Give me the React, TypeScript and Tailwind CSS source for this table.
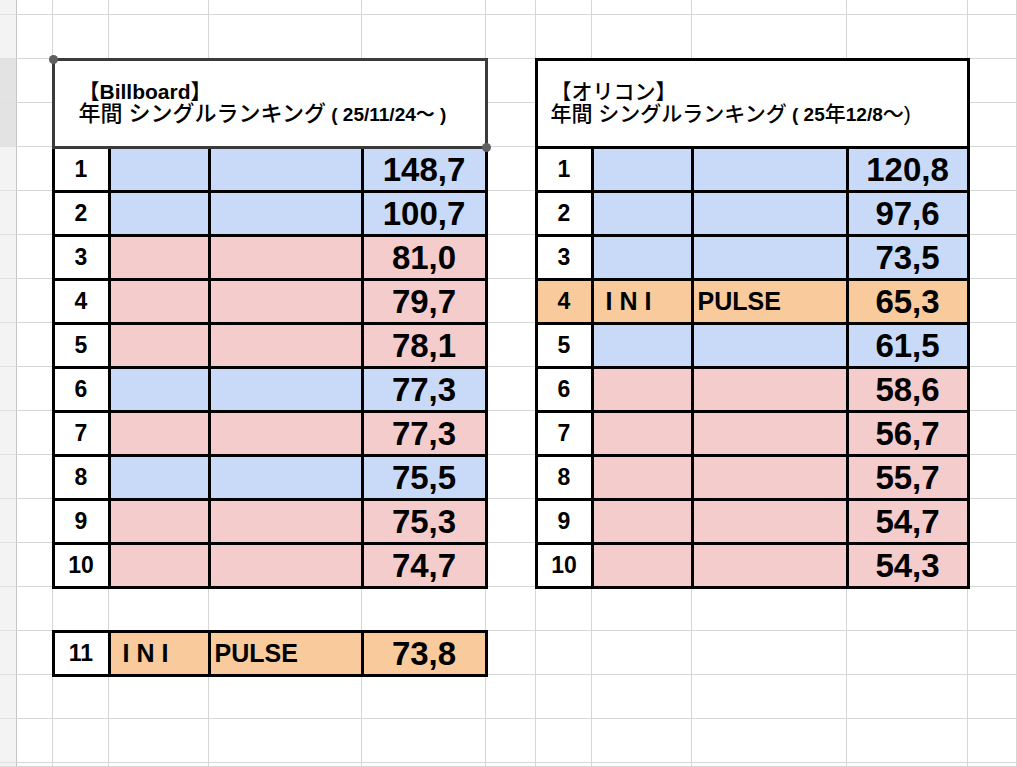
import React from 'react';

type Row = {
  rank: number;
  color: 'blue' | 'pink' | 'orange';
  value: string;
  artist?: string;
  song?: string;
  rankOrange?: boolean;
};

const fills = {
  blue: 'bg-[#c9daf8]',
  pink: 'bg-[#f4cccc]',
  orange: 'bg-[#f9cb9c]',
};

const billboard: Row[] = [
  { rank: 1, color: 'blue', value: '148,7' },
  { rank: 2, color: 'blue', value: '100,7' },
  { rank: 3, color: 'pink', value: '81,0' },
  { rank: 4, color: 'pink', value: '79,7' },
  { rank: 5, color: 'pink', value: '78,1' },
  { rank: 6, color: 'blue', value: '77,3' },
  { rank: 7, color: 'pink', value: '77,3' },
  { rank: 8, color: 'blue', value: '75,5' },
  { rank: 9, color: 'pink', value: '75,3' },
  { rank: 10, color: 'pink', value: '74,7' },
];

const billboardExtra: Row[] = [{ rank: 11, color: 'orange', value: '73,8', artist: 'I N I', song: 'PULSE' }];

const oricon: Row[] = [
  { rank: 1, color: 'blue', value: '120,8' },
  { rank: 2, color: 'blue', value: '97,6' },
  { rank: 3, color: 'blue', value: '73,5' },
  { rank: 4, color: 'orange', value: '65,3', artist: 'I N I', song: 'PULSE', rankOrange: true },
  { rank: 5, color: 'blue', value: '61,5' },
  { rank: 6, color: 'pink', value: '58,6' },
  { rank: 7, color: 'pink', value: '56,7' },
  { rank: 8, color: 'pink', value: '55,7' },
  { rank: 9, color: 'pink', value: '54,7' },
  { rank: 10, color: 'pink', value: '54,3' },
];

// sheet columns / rows
const COLS = 12;
const ROWS = 19;

function Cells({ rows }: { rows: Row[] }) {
  return (
    <>
      {rows.map((r) => (
        <React.Fragment key={r.rank}>
          <div className={`flex min-h-0 items-center justify-center pt-[1px] text-[23px] font-bold leading-none ${r.rankOrange ? fills.orange : 'bg-white'}`}>
            {r.rank}
          </div>
          <div className={`flex min-h-0 items-center pl-[12px] text-[25px] font-bold leading-none ${fills[r.color]}`}>{r.artist}</div>
          <div className={`flex min-h-0 items-center pl-[4px] text-[25px] font-bold leading-none ${fills[r.color]}`}>{r.song}</div>
          <div className={`flex min-h-0 items-center justify-center text-[33px] font-bold leading-none ${fills[r.color]}`}>{r.value}</div>
        </React.Fragment>
      ))}
    </>
  );
}

export default function App() {
  return (
    <div className="grid h-[767px] w-[1017px] overflow-hidden bg-white font-['Liberation_Sans','Noto_Sans_CJK_JP',sans-serif] text-black">
      {/* sheet gridlines */}
      <div className="col-start-1 row-start-1 grid grid-cols-[17px_36px_56px_100px_153px_124px_50px_56px_100px_155px_121px_1fr] grid-rows-[15px_repeat(17,44px)_1fr]">
        {Array.from({ length: ROWS }).map((_, r) =>
          Array.from({ length: COLS }).map((_, c) =>
            c === 0 ? (
              <div
                key={`${r}-${c}`}
                className={`border-r border-b border-r-[#c4c4c4] border-b-[#e0e0e0] ${r === 2 || r === 3 ? 'bg-[#e3e3e3]' : 'bg-[#f3f3f3]'}`}
              />
            ) : (
              <div key={`${r}-${c}`} className="border-r border-b border-[#d6d6d6]" />
            )
          )
        )}
      </div>

      {/* sheet content */}
      <div className="col-start-1 row-start-1 grid grid-cols-[17px_36px_56px_100px_153px_124px_50px_56px_100px_155px_121px_1fr] grid-rows-[15px_repeat(17,44px)_1fr]">
        {/* Billboard */}
        <div className="col-start-3 col-end-7 row-start-5 row-end-15 -m-[1.5px] grid grid-cols-[53fr_97fr_150fr_121fr] grid-rows-[repeat(10,minmax(0,1fr))] gap-[3px] bg-black p-[3px]">
          <Cells rows={billboard} />
        </div>
        <div className="col-start-3 col-end-7 row-start-16 row-end-17 -m-[1.5px] grid grid-cols-[53fr_97fr_150fr_121fr] grid-rows-[minmax(0,1fr)] gap-[3px] bg-black p-[3px]">
          <Cells rows={billboardExtra} />
        </div>
        <div className="relative z-10 col-start-3 col-end-7 row-start-3 row-end-5 -m-[1.5px] flex flex-col justify-center border-[3px] border-[#3b3b3b] bg-white pl-[24px] text-[21px] leading-[22px]">
          <div className="font-bold">【Billboard】</div>
          <div>
            <span className="text-[22px] font-medium">年間 シングルランキング</span>
            <span className="text-[19px] font-bold"> ( 25/11/24～ )</span>
          </div>
          <span className="absolute -left-[6px] -top-[6px] h-[9px] w-[9px] rounded-full bg-[#5f5f5f]" />
          <span className="absolute -right-[6px] -bottom-[6px] h-[9px] w-[9px] rounded-full bg-[#5f5f5f]" />
        </div>

        {/* Oricon */}
        <div className="col-start-8 col-end-12 row-start-5 row-end-15 -m-[1.5px] grid grid-cols-[53fr_97fr_152fr_118fr] grid-rows-[repeat(10,minmax(0,1fr))] gap-[3px] bg-black p-[3px]">
          <Cells rows={oricon} />
        </div>
        <div className="col-start-8 col-end-12 row-start-3 row-end-5 -m-[1.5px] flex flex-col justify-center border-[3px] border-black bg-white pl-[13px] text-[21px] leading-[22px]">
          <div className="font-medium">【オリコン】</div>
          <div>
            <span className="font-medium">年間 シングルランキング</span>
            <span className="text-[19px] font-bold"> ( 25</span>
            <span className="font-medium">年</span>
            <span className="text-[19px] font-bold">12/8</span>
            <span className="font-medium">～)</span>
          </div>
        </div>
      </div>
    </div>
  );
}
